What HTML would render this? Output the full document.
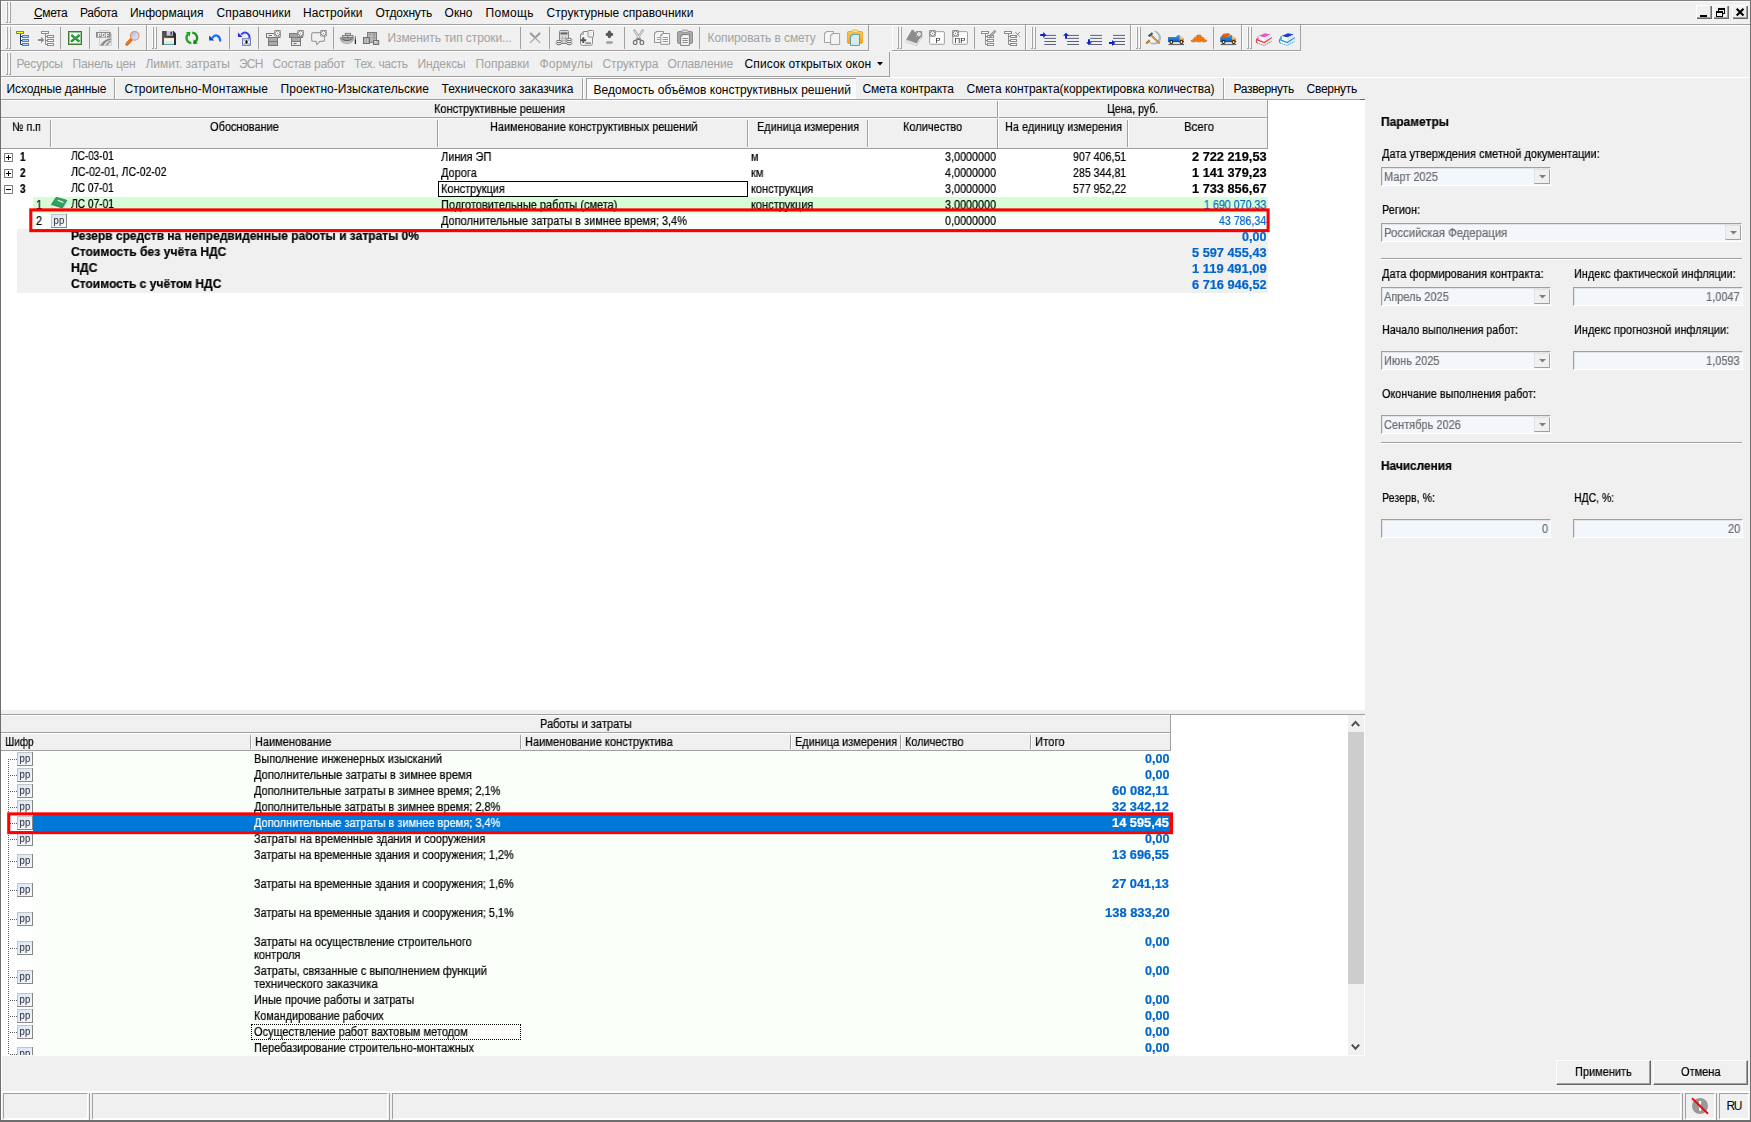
<!DOCTYPE html>
<html lang="ru"><head><meta charset="utf-8"><title>Смета</title><style>
html,body{margin:0;padding:0;background:#f0f0f0;overflow:hidden;}
#a{position:relative;width:1751px;height:1122px;overflow:hidden;background:#f0f0f0;font-family:"Liberation Sans",sans-serif;}
#a div,#a span.t,#a svg{position:absolute;}
#a span.t{white-space:pre;color:#000;}
#a span.m{font-size:12.5px;line-height:15px;transform-origin:0 0;will-change:transform;-webkit-text-stroke:.22px;}
#a span.b{font-weight:bold;}
#a span.s{font-size:12px;line-height:15px;}
</style></head><body><div id="a">
<svg style="left:0;top:0" width="0" height="0"><defs><linearGradient id="pg" x1="0" y1="0" x2=".6" y2="1"><stop offset="0" stop-color="#d8e7fc"/><stop offset=".55" stop-color="#e4edfb"/><stop offset="1" stop-color="#f6f6f8"/></linearGradient></defs></svg>
<div style="left:1px;top:1px;width:1749px;height:1px;background:#fafafa;"></div>
<div style="left:1px;top:1px;width:1px;height:98px;background:#ffffff;"></div>
<div style="left:6px;top:2px;width:1px;height:20px;background:#fafafa;"></div>
<div style="left:9px;top:2px;width:1px;height:20px;background:#fafafa;"></div>
<div style="left:7px;top:2px;width:1px;height:21px;background:#a4a4a4;"></div>
<div style="left:10px;top:2px;width:1px;height:21px;background:#a4a4a4;"></div>
<div style="left:6px;top:22px;width:1px;height:1px;background:#a4a4a4;"></div>
<div style="left:9px;top:22px;width:1px;height:1px;background:#a4a4a4;"></div>
<span class="t s" style="left:34.0px;top:6px;letter-spacing:-0.37px;">Смета</span>
<span class="t s" style="left:80.0px;top:6px;letter-spacing:-0.37px;">Работа</span>
<span class="t s" style="left:130.0px;top:6px;letter-spacing:-0.01px;">Информация</span>
<span class="t s" style="left:216.5px;top:6px;letter-spacing:0.14px;">Справочники</span>
<span class="t s" style="left:303.0px;top:6px;letter-spacing:0.07px;">Настройки</span>
<span class="t s" style="left:375.5px;top:6px;letter-spacing:-0.21px;">Отдохнуть</span>
<span class="t s" style="left:444.5px;top:6px;letter-spacing:0.05px;">Окно</span>
<span class="t s" style="left:485.5px;top:6px;letter-spacing:0.32px;">Помощь</span>
<span class="t s" style="left:546.5px;top:6px;letter-spacing:0.06px;">Структурные справочники</span>
<div style="left:34px;top:18px;width:8px;height:1px;background:#000;"></div>
<div style="left:0px;top:24px;width:1751px;height:1px;background:#a0a0a0;"></div>
<div style="left:1px;top:25px;width:1749px;height:1px;background:#ffffff;"></div>
<div style="left:1696px;top:5px;width:16px;height:14px;background:#f0f0f0;box-shadow:inset 1px 1px 0 #fff,inset -1px -1px 0 #696969,inset -2px -2px 0 #a0a0a0;"></div>
<div style="left:1713px;top:5px;width:16px;height:14px;background:#f0f0f0;box-shadow:inset 1px 1px 0 #fff,inset -1px -1px 0 #696969,inset -2px -2px 0 #a0a0a0;"></div>
<div style="left:1732px;top:5px;width:16px;height:14px;background:#f0f0f0;box-shadow:inset 1px 1px 0 #fff,inset -1px -1px 0 #696969,inset -2px -2px 0 #a0a0a0;"></div>
<svg style="left:1694px;top:3px" width="56" height="18" viewBox="1694 3 56 18" shape-rendering="crispEdges"><rect x="1700" y="15" width="7" height="2" fill="#000"/><rect x="1718" y="8" width="7" height="2" fill="#000"/><path d="M1724.5 10V13.5H1723" stroke="#000" fill="none"/><path d="M1718.5 10V11" stroke="#000"/><rect x="1716" y="11" width="7" height="2" fill="#000"/><rect x="1716.5" y="12.5" width="6" height="4" fill="none" stroke="#000"/></svg><svg style="left:1734px;top:6px" width="12" height="12" viewBox="1734 6 12 12"><path d="M1736.7 8.7L1743.5 15.5M1743.5 8.7L1736.7 15.5" stroke="#000" stroke-width="2.1"/></svg>
<div style="left:6px;top:27px;width:1px;height:21px;background:#fafafa;"></div>
<div style="left:9px;top:27px;width:1px;height:21px;background:#fafafa;"></div>
<div style="left:7px;top:27px;width:1px;height:22px;background:#a4a4a4;"></div>
<div style="left:10px;top:27px;width:1px;height:22px;background:#a4a4a4;"></div>
<div style="left:6px;top:48px;width:1px;height:1px;background:#a4a4a4;"></div>
<div style="left:9px;top:48px;width:1px;height:1px;background:#a4a4a4;"></div>
<div style="left:60px;top:27px;width:1px;height:22px;background:#a0a0a0;"></div>
<div style="left:89px;top:27px;width:1px;height:22px;background:#a0a0a0;"></div>
<div style="left:118px;top:27px;width:1px;height:22px;background:#a0a0a0;"></div>
<div style="left:229px;top:27px;width:1px;height:22px;background:#a0a0a0;"></div>
<div style="left:258px;top:27px;width:1px;height:22px;background:#a0a0a0;"></div>
<div style="left:333px;top:27px;width:1px;height:22px;background:#a0a0a0;"></div>
<div style="left:520px;top:27px;width:1px;height:22px;background:#a0a0a0;"></div>
<div style="left:549px;top:27px;width:1px;height:22px;background:#a0a0a0;"></div>
<div style="left:624px;top:27px;width:1px;height:22px;background:#a0a0a0;"></div>
<div style="left:699px;top:27px;width:1px;height:22px;background:#a0a0a0;"></div>
<div style="left:974px;top:27px;width:1px;height:22px;background:#a0a0a0;"></div>
<div style="left:1213px;top:27px;width:1px;height:22px;background:#a0a0a0;"></div>
<div style="left:146px;top:25px;width:1px;height:26px;background:#a0a0a0;"></div>
<div style="left:868px;top:25px;width:1px;height:26px;background:#a0a0a0;"></div>
<div style="left:1025px;top:25px;width:1px;height:26px;background:#a0a0a0;"></div>
<div style="left:1130px;top:25px;width:1px;height:26px;background:#a0a0a0;"></div>
<div style="left:1241px;top:25px;width:1px;height:26px;background:#a0a0a0;"></div>
<div style="left:1300px;top:25px;width:1px;height:26px;background:#a0a0a0;"></div>
<div style="left:147px;top:25px;width:1px;height:25px;background:#ffffff;"></div>
<div style="left:1026px;top:25px;width:1px;height:25px;background:#ffffff;"></div>
<div style="left:1131px;top:25px;width:1px;height:25px;background:#ffffff;"></div>
<div style="left:1242px;top:25px;width:1px;height:25px;background:#ffffff;"></div>
<div style="left:0px;top:50px;width:869px;height:1px;background:#a0a0a0;"></div>
<div style="left:892px;top:50px;width:409px;height:1px;background:#a0a0a0;"></div>
<div style="left:0px;top:51px;width:869px;height:1px;background:#ffffff;"></div>
<div style="left:892px;top:51px;width:409px;height:1px;background:#ffffff;"></div>
<div style="left:892px;top:25px;width:1px;height:25px;background:#ffffff;"></div>
<div style="left:152px;top:27px;width:1px;height:21px;background:#fafafa;"></div>
<div style="left:155px;top:27px;width:1px;height:21px;background:#fafafa;"></div>
<div style="left:153px;top:27px;width:1px;height:22px;background:#a4a4a4;"></div>
<div style="left:156px;top:27px;width:1px;height:22px;background:#a4a4a4;"></div>
<div style="left:152px;top:48px;width:1px;height:1px;background:#a4a4a4;"></div>
<div style="left:155px;top:48px;width:1px;height:1px;background:#a4a4a4;"></div>
<div style="left:897px;top:27px;width:1px;height:21px;background:#fafafa;"></div>
<div style="left:900px;top:27px;width:1px;height:21px;background:#fafafa;"></div>
<div style="left:898px;top:27px;width:1px;height:22px;background:#a4a4a4;"></div>
<div style="left:901px;top:27px;width:1px;height:22px;background:#a4a4a4;"></div>
<div style="left:897px;top:48px;width:1px;height:1px;background:#a4a4a4;"></div>
<div style="left:900px;top:48px;width:1px;height:1px;background:#a4a4a4;"></div>
<div style="left:1031px;top:27px;width:1px;height:21px;background:#fafafa;"></div>
<div style="left:1034px;top:27px;width:1px;height:21px;background:#fafafa;"></div>
<div style="left:1032px;top:27px;width:1px;height:22px;background:#a4a4a4;"></div>
<div style="left:1035px;top:27px;width:1px;height:22px;background:#a4a4a4;"></div>
<div style="left:1031px;top:48px;width:1px;height:1px;background:#a4a4a4;"></div>
<div style="left:1034px;top:48px;width:1px;height:1px;background:#a4a4a4;"></div>
<div style="left:1136px;top:27px;width:1px;height:21px;background:#fafafa;"></div>
<div style="left:1139px;top:27px;width:1px;height:21px;background:#fafafa;"></div>
<div style="left:1137px;top:27px;width:1px;height:22px;background:#a4a4a4;"></div>
<div style="left:1140px;top:27px;width:1px;height:22px;background:#a4a4a4;"></div>
<div style="left:1136px;top:48px;width:1px;height:1px;background:#a4a4a4;"></div>
<div style="left:1139px;top:48px;width:1px;height:1px;background:#a4a4a4;"></div>
<div style="left:1247px;top:27px;width:1px;height:21px;background:#fafafa;"></div>
<div style="left:1250px;top:27px;width:1px;height:21px;background:#fafafa;"></div>
<div style="left:1248px;top:27px;width:1px;height:22px;background:#a4a4a4;"></div>
<div style="left:1251px;top:27px;width:1px;height:22px;background:#a4a4a4;"></div>
<div style="left:1247px;top:48px;width:1px;height:1px;background:#a4a4a4;"></div>
<div style="left:1250px;top:48px;width:1px;height:1px;background:#a4a4a4;"></div>
<span class="t s" style="left:387.5px;top:31px;color:#a2a2a2;letter-spacing:-0.09px;">Изменить тип строки...</span>
<span class="t s" style="left:707.5px;top:31px;color:#a2a2a2;letter-spacing:-0.09px;">Копировать в смету</span>
<svg style="left:0;top:25px;will-change:transform" width="1310" height="26" viewBox="0 25 1310 26"><defs><linearGradient id="gb" x1="0" y1="0" x2="0" y2="1"><stop offset="0" stop-color="#4a9cf0"/><stop offset="1" stop-color="#0c5cc0"/></linearGradient><linearGradient id="gl" x1="0" y1="0" x2="1" y2="1"><stop offset="0" stop-color="#a4b8ee"/><stop offset="1" stop-color="#eaf0fd"/></linearGradient><linearGradient id="gs" x1="0" y1="0" x2="0" y2="1"><stop offset="0" stop-color="#fff"/><stop offset="1" stop-color="#bfe8e6"/></linearGradient><linearGradient id="gy" x1="0" y1="0" x2="0" y2="1"><stop offset="0" stop-color="#f7c858"/><stop offset="1" stop-color="#ffa400"/></linearGradient><linearGradient id="gk" x1="0" y1="0" x2="1" y2="0"><stop offset="0" stop-color="#5a5a5a"/><stop offset=".5" stop-color="#3a3a3a"/><stop offset="1" stop-color="#2a2a2a"/></linearGradient><linearGradient id="gw" x1="0" y1="0" x2="0" y2="1"><stop offset="0" stop-color="#8a8a8a"/><stop offset="1" stop-color="#d8d8d8"/></linearGradient></defs><rect x="16.5" y="31.5" width="7" height="2" fill="#ffff00" stroke="#8b8b3d"/><path d="M20.5 34V44.5M20.5 36.5h2M20.5 40.5h2M20.5 44.5h2" stroke="#1f3864" fill="none"/><rect x="22.5" y="35.5" width="6" height="2" fill="#aad4ff" stroke="#5b7fb8"/><rect x="22.5" y="39.5" width="6" height="2" fill="#aad4ff" stroke="#5b7fb8"/><rect x="22.5" y="43.5" width="6" height="2" fill="#aad4ff" stroke="#5b7fb8"/><rect x="41.5" y="31.5" width="7" height="2" fill="#fff" stroke="#8c8c8c"/><path d="M45.5 34V44.5M45.5 36.5h2M45.5 40.5h2M45.5 44.5h2" stroke="#8c8c8c" fill="none"/><rect x="47.5" y="35.5" width="6" height="2" fill="#fff" stroke="#8c8c8c"/><rect x="47.5" y="39.5" width="6" height="2" fill="#fff" stroke="#8c8c8c"/><rect x="47.5" y="43.5" width="6" height="2" fill="#fff" stroke="#8c8c8c"/><path d="M38 39h3.2v-2.2L44.3 40L41.2 43.2V41H38Z" fill="#8c8c8c"/><rect x="68.5" y="31.5" width="13" height="13" fill="#fff" stroke="#3e7a2e"/><rect x="69.5" y="32.5" width="11" height="11" fill="none" stroke="#9cc89c"/><path d="M71.4 35.2L79.4 41.6M79.6 35.2L71 41.6" stroke="#0f7a22" stroke-width="2.2"/><path d="M71.4 34.6L79.2 40.8M79.4 34.6L71.2 40.8" stroke="#36a846" stroke-width="1.5"/><path d="M99.5 30.5H108L111.5 34V45.5H99.5Z" fill="#ececec" stroke="#d0d0d0"/><path d="M100 45.4C103 41 106 38.8 111 38.2V40C107.5 40.6 105 42.5 103.5 45.4Z" fill="#8c8c8c"/><path d="M105.5 45.4C106.5 42.8 108.5 41.3 111 40.8V42.2C109.5 42.8 108.6 43.8 108 45.4Z" fill="#a0a0a0"/><rect x="96" y="32" width="14.7" height="5.6" fill="#8a8a8a"/><text x="97.6" y="36.7" font-family="Liberation Sans" font-weight="bold" font-size="5.6" fill="#fff" textLength="11.6" lengthAdjust="spacingAndGlyphs">PDF</text><path d="M131.4 39.4L127 44" stroke="#b8540c" stroke-width="3.2" stroke-linecap="round"/><path d="M131.4 39.2L127 43.7" stroke="#ee7a22" stroke-width="2" stroke-linecap="round"/><circle cx="134.7" cy="35.8" r="4.3" fill="url(#gl)" stroke="#e8935a" stroke-width="1.1"/><path d="M162 31H173.6L176 33.4V44.9H162Z" fill="url(#gk)"/><rect x="166.6" y="31" width="6.3" height="4.7" fill="#c9c9ea"/><rect x="170.4" y="31.7" width="1.6" height="3.1" fill="#4a4a4a"/><rect x="164" y="38" width="10" height="6.2" fill="url(#gs)"/><rect x="164" y="37.8" width="10" height="1" fill="#ffd9b3"/><rect x="164" y="44" width="10" height=".9" fill="#6aa8a8"/><path d="M191.34 43.18A5.3 5.3 0 0 1 188.05 34.15" stroke="#25a225" stroke-width="2.3" fill="none"/><path d="M190.46 31.75L185.79 32.31L189.89 36.42Z" fill="#25a225"/><path d="M192.26 32.62A5.3 5.3 0 0 1 195.55 41.65" stroke="#1c981c" stroke-width="2.3" fill="none"/><path d="M193.14 44.05L197.81 43.49L193.71 39.38Z" fill="#0c7c0c"/><path d="M220.2 40.6C219.8 35.6 215.6 33.6 212.4 37.6" stroke="#1a6af5" stroke-width="2.2" fill="none" stroke-linecap="round"/><path d="M209.2 35.4V40.4H214.2Z" fill="#0a3cdc"/><path d="M249.6 38.6C249.6 32.6 244.2 30.6 241.2 34.6" stroke="#3c3cf0" stroke-width="2" fill="none"/><path d="M238 32.4V37H242.6Z" fill="#2a2ae8"/><rect x="242.7" y="38.8" width="7.6" height="6.4" fill="#fff" stroke="#5060b0"/><path d="M244.6 40.4L248.4 43.6M248.4 40.4L244.6 43.6M246.5 40.2V43.8" stroke="#000" stroke-width=".9"/><rect x="268.5" y="37.5" width="9" height="8" fill="#aaa" stroke="#7a7a7a"/><path d="M268.5 41.5h9" stroke="#7a7a7a"/><rect x="266.5" y="33.5" width="13.5" height="4" fill="#eaeaea" stroke="#7a7a7a"/><path d="M268.8 35.5h3" stroke="#6a6a6a"/><rect x="274.2" y="30" width="6.6" height="6.6" rx="1.1" fill="#8a8a8a"/><path d="M275.15 33.3L277.5 30.949999999999996L279.85 33.3L277.5 35.65Z" fill="#fff"/><circle cx="277.5" cy="33.3" r=".6" fill="#8a8a8a"/><circle cx="275.35" cy="31.15" r=".5" fill="#e8e8e8"/><circle cx="275.35" cy="35.449999999999996" r=".5" fill="#e8e8e8"/><circle cx="279.65" cy="31.15" r=".5" fill="#e8e8e8"/><circle cx="279.65" cy="35.449999999999996" r=".5" fill="#e8e8e8"/><rect x="291.5" y="37.5" width="9" height="8" fill="#aaa" stroke="#7a7a7a"/><rect x="292" y="42" width="8" height="3" fill="#eaeaea"/><path d="M291.5 41.5h9" stroke="#7a7a7a"/><path d="M293.5 43.6h3" stroke="#6a6a6a"/><rect x="289.5" y="33.5" width="13" height="4" fill="#a2a2a2" stroke="#7a7a7a"/><rect x="297.3" y="30" width="6.6" height="6.6" rx="1.1" fill="#8a8a8a"/><path d="M298.25 33.3L300.6 30.949999999999996L302.95000000000005 33.3L300.6 35.65Z" fill="#fff"/><circle cx="300.6" cy="33.3" r=".6" fill="#8a8a8a"/><circle cx="298.45000000000005" cy="31.15" r=".5" fill="#e8e8e8"/><circle cx="298.45000000000005" cy="35.449999999999996" r=".5" fill="#e8e8e8"/><circle cx="302.75" cy="31.15" r=".5" fill="#e8e8e8"/><circle cx="302.75" cy="35.449999999999996" r=".5" fill="#e8e8e8"/><path d="M321 32.6H313.5Q311.6 32.6 311.6 34.5V39.4Q311.6 41.3 313.5 41.3H316L316.8 44.6L319.8 41.3H322.6Q324.5 41.3 324.5 39.4V36" fill="none" stroke="#a0a0a0" stroke-width="1.2"/><rect x="320.2" y="30" width="6.6" height="6.6" rx="1.1" fill="#8a8a8a"/><path d="M321.15 33.3L323.5 30.949999999999996L325.85 33.3L323.5 35.65Z" fill="#fff"/><circle cx="323.5" cy="33.3" r=".6" fill="#8a8a8a"/><circle cx="321.35" cy="31.15" r=".5" fill="#e8e8e8"/><circle cx="321.35" cy="35.449999999999996" r=".5" fill="#e8e8e8"/><circle cx="325.65" cy="31.15" r=".5" fill="#e8e8e8"/><circle cx="325.65" cy="35.449999999999996" r=".5" fill="#e8e8e8"/><path d="M340.2 37.5H353.8C353.8 41 351 43.7 347 43.7C343 43.7 340.2 41 340.2 37.5Z" fill="url(#gw)" stroke="#888" stroke-width=".6"/><path d="M342.5 39.3C345 40.8 349 40.8 351.5 39.3" stroke="#666" stroke-width="1.1" fill="none"/><rect x="345.3" y="33.3" width="5.3" height="2" fill="#d4d4d4" stroke="#6e6e6e" stroke-width=".8"/><rect x="342.4" y="35.5" width="5.3" height="2" fill="#d4d4d4" stroke="#6e6e6e" stroke-width=".8"/><rect x="347.7" y="35.5" width="5.3" height="2" fill="#d4d4d4" stroke="#6e6e6e" stroke-width=".8"/><path d="M355.4 36V40" stroke="#777" stroke-width="1"/><path d="M355.4 39.5V44" stroke="#222" stroke-width="1.2"/><rect x="367.5" y="32.5" width="9" height="9.8" fill="#b6b6b6" stroke="#7a7a7a"/><path d="M369 34.5h2M372.5 34h3M374 34v4M372.5 38h3" stroke="#8a8a8a" stroke-width=".8" fill="none"/><rect x="363.5" y="37.5" width="6" height="6" fill="#aaa" stroke="#707070"/><path d="M365.2 38.5v4.5M367.6 38.5v4.5" stroke="#d0d0d0" stroke-width=".8"/><rect x="373.5" y="40.5" width="5.2" height="4" fill="#bcbcbc" stroke="#707070"/><path d="M374.5 41.6h1.5" stroke="#fff" stroke-width=".8"/><path d="M530 32.8L540.2 42.8M540.2 32.8L530 42.8" stroke="#9c9c9c" stroke-width="1.1"/><path d="M530.3 33L534.6 37.2M540 33L535.6 37.2" stroke="#9c9c9c" stroke-width="2"/><rect x="559.5" y="30.5" width="9" height="13" rx="1" fill="#dcdcdc" stroke="#848484"/><rect x="560.5" y="32.4" width="7" height="2.1" fill="#666"/><path d="M562.5 36v7M565.5 36v7M560.5 38.3h7M560.5 40.6h7" stroke="#a8a8a8" stroke-width=".7"/><ellipse cx="558.9" cy="43.6" rx="2.6" ry="1.15" fill="#f2f2f2" stroke="#6e6e6e" stroke-width="1"/><ellipse cx="558.9" cy="41.5" rx="2.6" ry="1.15" fill="#f2f2f2" stroke="#6e6e6e" stroke-width="1"/><ellipse cx="569.2" cy="43.6" rx="2.6" ry="1.15" fill="#f2f2f2" stroke="#6e6e6e" stroke-width="1"/><ellipse cx="569.2" cy="41.5" rx="2.6" ry="1.15" fill="#f2f2f2" stroke="#6e6e6e" stroke-width="1"/><ellipse cx="569.2" cy="39.4" rx="2.6" ry="1.15" fill="#f2f2f2" stroke="#6e6e6e" stroke-width="1"/><path d="M583.4 31.5H590.6Q592.5 31.5 592.5 33.4V43.4Q592.5 45.3 590.6 45.3H582.4Q580.5 45.3 580.5 43.4V34.4Z" fill="#f5f5f5" stroke="#8c8c8c"/><path d="M580.5 34.4H583.4V31.5" fill="none" stroke="#8c8c8c" stroke-width=".8"/><rect x="588" y="30.5" width="5.5" height="6.5" rx=".9" fill="#fafafa" stroke="#8c8c8c"/><path d="M589.6 32.6h2M589.6 34.6h2" stroke="#c8c8c8" stroke-width=".7"/><path d="M583.3 37.3V43.1M580.4 40.2H586.2" stroke="#555" stroke-width="1.9"/><rect x="585.4" y="42.3" width="5.6" height="1.6" fill="#888"/><path d="M609.4 32.2V36.6M607.2 34.4H611.6" stroke="#585858" stroke-width="3.2" stroke-linecap="round"/><rect x="606.1" y="41.2" width="6.7" height="2.5" rx="1" fill="#9c9c9c"/><path d="M634.3 30.4L640.3 39.6M642.7 30.4L636.7 39.6" stroke="#9a9a9a" stroke-width="2.2" stroke-linecap="round"/><path d="M634.5 30.8L640.1 39.4M642.5 30.8L636.9 39.4" stroke="#f6f6f6" stroke-width=".9" stroke-linecap="round"/><path d="M638.5 38.2L636.2 40.4M638.5 38.2L640.8 40.4" stroke="#777" stroke-width="1.3"/><ellipse cx="635.2" cy="42.4" rx="1.8" ry="2.1" fill="none" stroke="#777" stroke-width="1.2"/><ellipse cx="641.9" cy="42.4" rx="1.8" ry="2.1" fill="none" stroke="#777" stroke-width="1.2"/><path d="M656.1 31.5H663.5V42.5H654.5V33.1Z" fill="#f4f4f4" stroke="#949494" stroke-linejoin="round"/><path d="M654.5 33.1H656.1V31.5" fill="none" stroke="#949494" stroke-width=".7"/><path d="M656.8 37.5h3M656.8 39.5h3" stroke="#949494" stroke-width=".9"/><path d="M662.4 33.5H669.5999999999999V44.3H660.8V35.1Z" fill="#f8f8f8" stroke="#949494" stroke-linejoin="round"/><path d="M660.8 35.1H662.4V33.5" fill="none" stroke="#949494" stroke-width=".7"/><path d="M662.6 37.5h5.4M662.6 39.5h5.4M662.6 41.5h5.4" stroke="#8c8c8c" stroke-width=".9"/><rect x="677.5" y="31.5" width="15" height="12" rx="1.3" fill="#a9a9a9" stroke="#8e8e8e"/><rect x="681.8" y="30" width="6.4" height="2.4" rx="1.1" fill="#e2e2e2" stroke="#8e8e8e" stroke-width=".8"/><path d="M682.2 34.6H689.4V45.400000000000006H680.6V36.2Z" fill="#f4f4f4" stroke="#7e7e7e" stroke-linejoin="round"/><path d="M680.6 36.2H682.2V34.6" fill="none" stroke="#7e7e7e" stroke-width=".7"/><path d="M682.4 38.5h5.4M682.4 40.5h5.4M682.4 42.5h5.4" stroke="#7e7e7e" stroke-width=".9"/><path d="M826.1 31.5H833.5V42.5H824.5V33.1Z" fill="#f6f6f6" stroke="#a4a4a4" stroke-linejoin="round"/><path d="M824.5 33.1H826.1V31.5" fill="none" stroke="#a4a4a4" stroke-width=".7"/><path d="M832.2 33.5H839.6V44.5H830.6V35.1Z" fill="#f4f4f4" stroke="#a4a4a4" stroke-linejoin="round"/><path d="M830.6 35.1H832.2V33.5" fill="none" stroke="#a4a4a4" stroke-width=".7"/><rect x="847.4" y="31.5" width="15.2" height="12" rx="1.3" fill="url(#gy)" stroke="#e8a028" stroke-width=".8"/><rect x="852" y="30" width="6" height="2.5" rx="1.2" fill="#f2e67c" stroke="#d8b040" stroke-width=".7"/><path d="M852.1 34.4H859.5V45.4H850.5V36.0Z" fill="#d2eef2" stroke="#6a98a8" stroke-linejoin="round"/><path d="M850.5 36.0H852.1V34.4" fill="none" stroke="#6a98a8" stroke-width=".7"/><path d="M906.2 39.6L916.6 43.2L921.6 35.2L921.8 37.6L916.9 45.8L906 42.2Z" fill="#e6e6e6" stroke="#b8b8b8" stroke-width=".5"/><path d="M911.6 30.2L921.6 35L916.6 43.2L906.2 39.6Z" fill="#8c8c8c"/><path d="M911.6 30.2L913.5 30.4L914 32" fill="#8c8c8c" stroke="#7a7a7a" stroke-width=".6"/><rect x="915.6" y="30.9" width="6.6" height="6.6" rx="1.1" fill="#8a8a8a"/><path d="M916.55 34.199999999999996L918.9 31.849999999999994L921.25 34.199999999999996L918.9 36.55Z" fill="#fff"/><circle cx="918.9" cy="34.199999999999996" r=".6" fill="#8a8a8a"/><circle cx="916.75" cy="32.05" r=".5" fill="#e8e8e8"/><circle cx="916.75" cy="36.349999999999994" r=".5" fill="#e8e8e8"/><circle cx="921.05" cy="32.05" r=".5" fill="#e8e8e8"/><circle cx="921.05" cy="36.349999999999994" r=".5" fill="#e8e8e8"/><rect x="929.6500000000001" y="31.65" width="14.7" height="12.6" rx=".8" fill="#fff" stroke="#929292" stroke-width=".9"/><rect x="929.1" y="30.1" width="6.7" height="6.7" rx="1.1" fill="#8a8a8a"/><path d="M930.1 33.45L932.45 31.1L934.8000000000001 33.45L932.45 35.800000000000004Z" fill="#fff"/><circle cx="932.45" cy="33.45" r=".6" fill="#8a8a8a"/><circle cx="930.3000000000001" cy="31.300000000000004" r=".5" fill="#e8e8e8"/><circle cx="930.3000000000001" cy="35.6" r=".5" fill="#e8e8e8"/><circle cx="934.6" cy="31.300000000000004" r=".5" fill="#e8e8e8"/><circle cx="934.6" cy="35.6" r=".5" fill="#e8e8e8"/><text x="935.6" y="42.9" font-family="Liberation Sans" font-size="8.1" fill="#111" textLength="4.9" lengthAdjust="spacingAndGlyphs">Р</text><rect x="952.75" y="31.65" width="14.7" height="12.6" rx=".8" fill="#fff" stroke="#929292" stroke-width=".9"/><rect x="952.1999999999999" y="30.1" width="6.7" height="6.7" rx="1.1" fill="#8a8a8a"/><path d="M953.1999999999999 33.45L955.55 31.1L957.9 33.45L955.55 35.800000000000004Z" fill="#fff"/><circle cx="955.55" cy="33.45" r=".6" fill="#8a8a8a"/><circle cx="953.4" cy="31.300000000000004" r=".5" fill="#e8e8e8"/><circle cx="953.4" cy="35.6" r=".5" fill="#e8e8e8"/><circle cx="957.6999999999999" cy="31.300000000000004" r=".5" fill="#e8e8e8"/><circle cx="957.6999999999999" cy="35.6" r=".5" fill="#e8e8e8"/><text x="954.6" y="42.9" font-family="Liberation Sans" font-size="8.1" fill="#111" textLength="10.9" lengthAdjust="spacingAndGlyphs">ПР</text><rect x="981.5" y="31.5" width="7" height="2" fill="#fff" stroke="#8c8c8c"/><path d="M985.5 34V44.5M985.5 36.5h2M985.5 40.5h2M985.5 44.5h2" stroke="#8c8c8c" fill="none"/><rect x="987.5" y="35.5" width="6" height="2" fill="#fff" stroke="#8c8c8c"/><rect x="987.5" y="39.5" width="6" height="2" fill="#fff" stroke="#8c8c8c"/><rect x="987.5" y="43.5" width="6" height="2" fill="#fff" stroke="#8c8c8c"/><path d="M995.6 30.6L989.6 36.6" stroke="#8c8c8c" stroke-width="2.4"/><path d="M995.6 30.6L990.6 35.6" stroke="#f0f0f0" stroke-width=".9" stroke-dasharray="1 .8"/><rect x="1004.5" y="31.5" width="7" height="2" fill="#fff" stroke="#8c8c8c"/><path d="M1008.5 34V44.5M1008.5 36.5h2M1008.5 40.5h2M1008.5 44.5h2" stroke="#8c8c8c" fill="none"/><rect x="1010.5" y="35.5" width="6" height="2" fill="#fff" stroke="#8c8c8c"/><rect x="1010.5" y="39.5" width="6" height="2" fill="#fff" stroke="#8c8c8c"/><rect x="1010.5" y="43.5" width="6" height="2" fill="#fff" stroke="#8c8c8c"/><path d="M1015.3 32L1019.9 36.7M1019.9 32L1015.3 36.7" stroke="#8c8c8c" stroke-width="1"/><path d="M1044.3 35.4H1056" stroke="#5a6080" stroke-width="1"/><path d="M1044.3 38.4H1056" stroke="#5a6080" stroke-width="1"/><path d="M1044.3 41.5H1056" stroke="#5a6080" stroke-width="1"/><path d="M1044.3 44.5H1056" stroke="#5a6080" stroke-width="1"/><path d="M1040.2 34h3v-1.9L1046.2 35L1043.2 37.9V36h-3Z" fill="#0a24d4"/><path d="M1067.2 35.4H1079" stroke="#5a6080" stroke-width="1"/><path d="M1067.2 38.4H1079" stroke="#5a6080" stroke-width="1"/><path d="M1067.2 41.5H1079" stroke="#5a6080" stroke-width="1"/><path d="M1067.2 44.5H1079" stroke="#5a6080" stroke-width="1"/><path d="M1065 38.8v-3h-2L1066 32.8L1069 35.8h-2v3Z" fill="#0a24d4"/><path d="M1090.2 35.4H1102" stroke="#5a6080" stroke-width="1"/><path d="M1090.2 38.4H1102" stroke="#5a6080" stroke-width="1"/><path d="M1090.2 41.5H1102" stroke="#5a6080" stroke-width="1"/><path d="M1090.2 44.5H1102" stroke="#5a6080" stroke-width="1"/><path d="M1088 39.2v3h-2L1089 45.2L1092 42.2h-2v-3Z" fill="#0a24d4"/><path d="M1113 35.4H1125" stroke="#5a6080" stroke-width="1"/><path d="M1113 38.4H1125" stroke="#5a6080" stroke-width="1"/><path d="M1113 41.5H1125" stroke="#5a6080" stroke-width="1"/><path d="M1113 44.5H1125" stroke="#5a6080" stroke-width="1"/><path d="M1109 42h3v-1.9L1115.2 43L1112 45.9V44h-3Z" fill="#0a24d4"/><path d="M1154.4 31.1C1159.4 32 1162 37 1159.9 41.2C1157.8 44.6 1152.8 45 1149.6 42.4C1153 44 1156.9 43.2 1158.5 40.2C1160 37.2 1158.4 33.2 1154.4 31.1Z" fill="#b4c6cc" stroke="#7f979f" stroke-width=".45"/><path d="M1146.3 43.4L1149.7 40.2" stroke="#a05c14" stroke-width="2"/><path d="M1146.3 43.4L1149.7 40.2" stroke="#f0983a" stroke-width="1"/><path d="M1150.8 34.8L1159.6 43.5" stroke="#a8641c" stroke-width="1.7"/><path d="M1150.8 34.8L1159.4 43.3" stroke="#f4a448" stroke-width=".8"/><path d="M1147.9 35.4L1151.9 32.3L1153.2 33.7L1149.4 36.9Z" fill="#3e5058"/><g transform="translate(0,0)"><path d="M1168 37.1H1175.6L1178.3 34.9H1179.8V41.6H1168Z" fill="url(#gb)"/><path d="M1179.8 36.4H1181.6L1184 38.9V41.8H1179.8Z" fill="#f09018"/><path d="M1180.3 37H1181.4L1182.7 38.4H1180.3Z" fill="#dff4fa"/><path d="M1168.3 41.3H1184V42.1H1168.3Z" fill="#222"/><circle cx="1171.4" cy="42" r="1.9" fill="#111"/><circle cx="1171.4" cy="42" r=".95" fill="#ffffa0"/><circle cx="1181.4" cy="42" r="1.9" fill="#111"/><circle cx="1181.4" cy="42" r=".95" fill="#ffffa0"/><path d="M1168.5 44.4H1184" stroke="#3a3a3a" stroke-width="1"/><path d="M1169.5 45.1H1183" stroke="#c4c4c4" stroke-width=".6"/></g><ellipse cx="1198.9" cy="36.2" rx="2.6" ry="1.15" fill="#ff8414" stroke="#c24c00" stroke-width=".6"/><ellipse cx="1196.3" cy="38.5" rx="2.6" ry="1.15" fill="#ff8414" stroke="#c24c00" stroke-width=".6"/><ellipse cx="1201.6" cy="38.5" rx="2.6" ry="1.15" fill="#ff8414" stroke="#c24c00" stroke-width=".6"/><ellipse cx="1193.7" cy="40.8" rx="2.6" ry="1.15" fill="#ff8414" stroke="#c24c00" stroke-width=".6"/><ellipse cx="1198.9" cy="40.8" rx="2.6" ry="1.15" fill="#ff8414" stroke="#c24c00" stroke-width=".6"/><ellipse cx="1204.2" cy="40.8" rx="2.6" ry="1.15" fill="#ff8414" stroke="#c24c00" stroke-width=".6"/><g transform="translate(52.2,0)"><ellipse cx="1171.2" cy="36.4" rx="2" ry="1.1" fill="#d85a00" stroke="#b84800" stroke-width=".4"/><ellipse cx="1174.4" cy="36.2" rx="2" ry="1.1" fill="#f07810" stroke="#b84800" stroke-width=".4"/><ellipse cx="1172.6" cy="34.8" rx="2" ry="1.1" fill="#f07810" stroke="#b84800" stroke-width=".4"/><ellipse cx="1175.6" cy="34.6" rx="2" ry="1.1" fill="#e06400" stroke="#b84800" stroke-width=".4"/><path d="M1168 37.1H1175.6L1178.3 34.9H1179.8V41.6H1168Z" fill="url(#gb)"/><path d="M1179.8 36.4H1181.6L1184 38.9V41.8H1179.8Z" fill="#f09018"/><path d="M1180.3 37H1181.4L1182.7 38.4H1180.3Z" fill="#dff4fa"/><path d="M1168.3 41.3H1184V42.1H1168.3Z" fill="#222"/><circle cx="1171.4" cy="42" r="1.9" fill="#111"/><circle cx="1171.4" cy="42" r=".95" fill="#ffffa0"/><circle cx="1181.4" cy="42" r="1.9" fill="#111"/><circle cx="1181.4" cy="42" r=".95" fill="#ffffa0"/><path d="M1168.5 44.4H1184" stroke="#3a3a3a" stroke-width="1"/><path d="M1169.5 45.1H1183" stroke="#c4c4c4" stroke-width=".6"/></g><g transform="translate(0,0)"><path d="M1256.6 40.2L1264.2 43.2L1271.7 38.2L1271.7 41.3L1264.3 45.3L1256.8 42.6Z" fill="#fff"/><path d="M1264.2 43.2L1271.7 38.2V41.3L1264.3 45.3Z" fill="#dde6f2"/><path d="M1258 38.6C1256 39 1255.8 41.8 1257.2 42.8" stroke="#f03434" stroke-width="1.1" fill="none"/><path d="M1256.8 39.6L1264.2 42.6L1271.7 37.6" stroke="#f03434" stroke-width="1.15" fill="none"/><path d="M1257 43L1264.3 45.4L1271.6 41.4" stroke="#f03434" stroke-width=".9" fill="none" stroke-dasharray="1.3 .9"/><path d="M1258.3 36L1265 33.3L1270.8 34.5L1264.4 37.4Z" fill="#e85ab2"/><path d="M1258.3 36L1264.4 37.4L1270.8 34.5V37.4L1264.4 40.7L1259 38.7Z" fill="#fff"/><path d="M1264.4 37.4L1270.8 34.5V37.4L1264.4 40.7Z" fill="#dde6f2"/><path d="M1258.3 36.2C1257.6 37 1257.9 38.3 1259 38.7" stroke="#e85ab2" stroke-width="1" fill="none"/></g><g transform="translate(23,0)"><path d="M1256.6 40.2L1264.2 43.2L1271.7 38.2L1271.7 41.3L1264.3 45.3L1256.8 42.6Z" fill="#fff"/><path d="M1264.2 43.2L1271.7 38.2V41.3L1264.3 45.3Z" fill="#dde6f2"/><path d="M1258 38.6C1256 39 1255.8 41.8 1257.2 42.8" stroke="#1c98e0" stroke-width="1.1" fill="none"/><path d="M1256.8 39.6L1264.2 42.6L1271.7 37.6" stroke="#1c98e0" stroke-width="1.15" fill="none"/><path d="M1257 43L1264.3 45.4L1271.6 41.4" stroke="#1c98e0" stroke-width=".9" fill="none" stroke-dasharray="1.3 .9"/><path d="M1258.3 36L1265 33.3L1270.8 34.5L1264.4 37.4Z" fill="#1a3cd0"/><path d="M1258.3 36L1264.4 37.4L1270.8 34.5V37.4L1264.4 40.7L1259 38.7Z" fill="#fff"/><path d="M1264.4 37.4L1270.8 34.5V37.4L1264.4 40.7Z" fill="#dde6f2"/><path d="M1258.3 36.2C1257.6 37 1257.9 38.3 1259 38.7" stroke="#1a3cd0" stroke-width="1" fill="none"/></g></svg>
<div style="left:6px;top:53px;width:1px;height:21px;background:#fafafa;"></div>
<div style="left:9px;top:53px;width:1px;height:21px;background:#fafafa;"></div>
<div style="left:7px;top:53px;width:1px;height:22px;background:#a4a4a4;"></div>
<div style="left:10px;top:53px;width:1px;height:22px;background:#a4a4a4;"></div>
<div style="left:6px;top:74px;width:1px;height:1px;background:#a4a4a4;"></div>
<div style="left:9px;top:74px;width:1px;height:1px;background:#a4a4a4;"></div>
<span class="t s" style="left:16.5px;top:57px;color:#a2a2a2;letter-spacing:-0.16px;">Ресурсы</span>
<span class="t s" style="left:72.5px;top:57px;color:#a2a2a2;letter-spacing:-0.18px;">Панель цен</span>
<span class="t s" style="left:145.5px;top:57px;color:#a2a2a2;letter-spacing:-0.05px;">Лимит. затраты</span>
<span class="t s" style="left:239.0px;top:57px;color:#a2a2a2;letter-spacing:-0.82px;">ЭСН</span>
<span class="t s" style="left:272.5px;top:57px;color:#a2a2a2;letter-spacing:-0.23px;">Состав работ</span>
<span class="t s" style="left:354.0px;top:57px;color:#a2a2a2;letter-spacing:-0.27px;">Тех. часть</span>
<span class="t s" style="left:417.5px;top:57px;color:#a2a2a2;letter-spacing:-0.13px;">Индексы</span>
<span class="t s" style="left:475.5px;top:57px;color:#a2a2a2;letter-spacing:0.04px;">Поправки</span>
<span class="t s" style="left:539.5px;top:57px;color:#a2a2a2;letter-spacing:0.18px;">Формулы</span>
<span class="t s" style="left:602.5px;top:57px;color:#a2a2a2;letter-spacing:-0.14px;">Структура</span>
<span class="t s" style="left:667.5px;top:57px;color:#a2a2a2;letter-spacing:-0.13px;">Оглавление</span>
<span class="t s" style="left:744.5px;top:57px;letter-spacing:0.11px;">Список открытых окон</span>
<svg style="left:877px;top:62px" width="6" height="4"><path d="M0 0h6l-3 3.5z" fill="#000"/></svg>
<div style="left:889px;top:52px;width:1px;height:25px;background:#a0a0a0;"></div>
<div style="left:0px;top:76px;width:890px;height:1px;background:#a0a0a0;"></div>
<div style="left:0px;top:77px;width:1751px;height:1px;background:#ffffff;"></div>
<div style="left:586px;top:78px;width:270px;height:21px;background:#fafafa;"></div>
<div style="left:586px;top:78px;width:270px;height:1px;background:#a0a0a0;"></div>
<div style="left:586px;top:78px;width:1px;height:21px;background:#a0a0a0;"></div>
<div style="left:587px;top:98px;width:269px;height:1px;background:#ffffff;"></div>
<span class="t s" style="left:6.5px;top:82px;letter-spacing:-0.1px;">Исходные данные</span>
<span class="t s" style="left:124.5px;top:82px;letter-spacing:0.08px;">Строительно-Монтажные</span>
<span class="t s" style="left:280.5px;top:82px;letter-spacing:0.06px;">Проектно-Изыскательские</span>
<span class="t s" style="left:441.5px;top:82px;">Технического заказчика</span>
<span class="t s" style="left:862.5px;top:82px;letter-spacing:-0.15px;">Смета контракта</span>
<span class="t s" style="left:966.5px;top:82px;letter-spacing:-0.03px;">Смета контракта(корректировка количества)</span>
<span class="t s" style="left:1233.5px;top:82px;letter-spacing:-0.33px;">Развернуть</span>
<span class="t s" style="left:1306.5px;top:82px;letter-spacing:-0.26px;">Свернуть</span>
<span class="t s" style="left:593.5px;top:83px;letter-spacing:0.01px;">Ведомость объёмов конструктивных решений</span>
<div style="left:114px;top:78px;width:1px;height:21px;background:#a0a0a0;"></div>
<div style="left:115px;top:78px;width:1px;height:21px;background:#ffffff;"></div>
<div style="left:582px;top:78px;width:1px;height:21px;background:#a0a0a0;"></div>
<div style="left:583px;top:78px;width:1px;height:21px;background:#ffffff;"></div>
<div style="left:1223px;top:78px;width:1px;height:21px;background:#a0a0a0;"></div>
<div style="left:1224px;top:78px;width:1px;height:21px;background:#ffffff;"></div>
<div style="left:0px;top:99px;width:1364px;height:1px;background:#a0a0a0;"></div>
<div style="left:1px;top:100px;width:1364px;height:610px;background:#ffffff;"></div>
<div style="left:1px;top:100px;width:1267px;height:48px;background:#f0f0f0;"></div>
<div style="left:1px;top:117px;width:1267px;height:1px;background:#a0a0a0;"></div>
<div style="left:1px;top:148px;width:1267px;height:1px;background:#a0a0a0;"></div>
<div style="left:1267px;top:100px;width:1px;height:49px;background:#a0a0a0;"></div>
<div style="left:997px;top:100px;width:1px;height:48px;background:#a0a0a0;"></div>
<div style="left:1px;top:118px;width:1266px;height:1px;background:#ffffff;"></div>
<div style="left:1px;top:100px;width:1266px;height:1px;background:#ffffff;"></div>
<div style="left:50px;top:120px;width:1px;height:27px;background:#a0a0a0;"></div>
<div style="left:51px;top:120px;width:1px;height:27px;background:#ffffff;"></div>
<div style="left:437px;top:120px;width:1px;height:27px;background:#a0a0a0;"></div>
<div style="left:438px;top:120px;width:1px;height:27px;background:#ffffff;"></div>
<div style="left:747px;top:120px;width:1px;height:27px;background:#a0a0a0;"></div>
<div style="left:748px;top:120px;width:1px;height:27px;background:#ffffff;"></div>
<div style="left:867px;top:120px;width:1px;height:27px;background:#a0a0a0;"></div>
<div style="left:868px;top:120px;width:1px;height:27px;background:#ffffff;"></div>
<div style="left:1127px;top:120px;width:1px;height:27px;background:#a0a0a0;"></div>
<div style="left:1128px;top:120px;width:1px;height:27px;background:#ffffff;"></div>
<div style="left:998px;top:100px;width:1px;height:48px;background:#ffffff;"></div>
<span class="t m" style="left:434.0px;top:102px;transform:scaleX(0.8793);">Конструктивные решения</span>
<span class="t m" style="left:1107.0px;top:102px;transform:scaleX(0.8415);">Цена, руб.</span>
<span class="t m" style="left:11.5px;top:120px;transform:scaleX(0.8553);">№ п.п</span>
<span class="t m" style="left:209.5px;top:120px;transform:scaleX(0.88);">Обоснование</span>
<span class="t m" style="left:489.5px;top:120px;transform:scaleX(0.8757);">Наименование конструктивных решений</span>
<span class="t m" style="left:757.0px;top:120px;transform:scaleX(0.8725);">Единица измерения</span>
<span class="t m" style="left:903.0px;top:120px;transform:scaleX(0.8802);">Количество</span>
<span class="t m" style="left:1004.5px;top:120px;transform:scaleX(0.8731);">На единицу измерения</span>
<span class="t m" style="left:1183.5px;top:120px;transform:scaleX(0.9182);">Всего</span>
<span class="t m b" style="left:20.0px;top:150px;transform:scaleX(0.791);">1</span>
<span class="t m" style="left:71.0px;top:149px;transform:scaleX(0.8);">ЛС-03-01</span>
<span class="t m" style="left:441.0px;top:150px;transform:scaleX(0.88);">Линия ЭП</span>
<span class="t m" style="left:750.5px;top:150px;transform:scaleX(0.88);">м</span>
<span class="t m" style="left:945.0px;top:150px;transform:scaleX(0.863);">3,0000000</span>
<span class="t m" style="left:1073.0px;top:150px;transform:scaleX(0.8503);">907 406,51</span>
<span class="t m b" style="left:1191.5px;top:150px;transform:scaleX(1.0219);">2 722 219,53</span>
<span class="t m b" style="left:20.0px;top:166px;transform:scaleX(0.791);">2</span>
<span class="t m" style="left:71.0px;top:165px;transform:scaleX(0.8401);">ЛС-02-01, ЛС-02-02</span>
<span class="t m" style="left:441.0px;top:166px;transform:scaleX(0.88);">Дорога</span>
<span class="t m" style="left:750.5px;top:166px;transform:scaleX(0.88);">км</span>
<span class="t m" style="left:945.0px;top:166px;transform:scaleX(0.863);">4,0000000</span>
<span class="t m" style="left:1073.0px;top:166px;transform:scaleX(0.8503);">285 344,81</span>
<span class="t m b" style="left:1191.5px;top:166px;transform:scaleX(1.0219);">1 141 379,23</span>
<span class="t m b" style="left:20.0px;top:182px;transform:scaleX(0.791);">3</span>
<span class="t m" style="left:71.0px;top:181px;transform:scaleX(0.8104);">ЛС 07-01</span>
<span class="t m" style="left:750.5px;top:182px;transform:scaleX(0.88);">конструкция</span>
<span class="t m" style="left:945.0px;top:182px;transform:scaleX(0.863);">3,0000000</span>
<span class="t m" style="left:1073.0px;top:182px;transform:scaleX(0.8503);">577 952,22</span>
<span class="t m b" style="left:1191.5px;top:182px;transform:scaleX(1.0219);">1 733 856,67</span>
<div style="left:438px;top:181px;width:310px;height:16px;background:#ffffff;box-sizing:border-box;border:1px solid #000;"></div>
<span class="t m" style="left:441.0px;top:182px;transform:scaleX(0.88);">Конструкция</span>
<svg style="left:4px;top:153px" width="9" height="9" shape-rendering="crispEdges"><rect x=".5" y=".5" width="8" height="8" fill="#fff" stroke="#808080"/><path d="M2 4.5h5" stroke="#000"/><path d="M4.5 2v5" stroke="#000"/></svg>
<svg style="left:4px;top:169px" width="9" height="9" shape-rendering="crispEdges"><rect x=".5" y=".5" width="8" height="8" fill="#fff" stroke="#808080"/><path d="M2 4.5h5" stroke="#000"/><path d="M4.5 2v5" stroke="#000"/></svg>
<svg style="left:4px;top:185px" width="9" height="9" shape-rendering="crispEdges"><rect x=".5" y=".5" width="8" height="8" fill="#fff" stroke="#808080"/><path d="M2 4.5h5" stroke="#000"/></svg>
<div style="left:33px;top:197px;width:1235px;height:16px;background:#d6fdd6;"></div>
<span class="t m" style="left:35.5px;top:198px;transform:scaleX(0.88);">1</span>
<span class="t m" style="left:71.0px;top:197px;transform:scaleX(0.8142);">ЛС 07-01</span>
<span class="t m" style="left:441.0px;top:198px;transform:scaleX(0.88);">Подготовительные работы (смета)</span>
<span class="t m" style="left:750.5px;top:198px;transform:scaleX(0.88);">конструкция</span>
<span class="t m" style="left:945.0px;top:198px;transform:scaleX(0.863);">3,0000000</span>
<span class="t m" style="left:1203.5px;top:198px;transform:scaleX(0.8548);color:#0066cc;">1 690 070,33</span>
<svg style="left:51px;top:197px" width="17" height="16" viewBox="51 197 17 16"><path d="M51.4 204.5L62.3 207.9L66.8 200.3L66.9 203.2L62.6 212L51.5 207.6Z" fill="#f0f0f0" stroke="#c8c8d0" stroke-width=".5"/><path d="M62.3 207.9L66.8 200.3L66.9 203.2L62.6 212Z" fill="#d8dce4"/><path d="M56.2 197.2L66.8 200.3L62.3 207.9L51.4 204.5Z" fill="#32a260" stroke="#1f8a52" stroke-width=".8" stroke-linejoin="round"/><path d="M57.8 200.2L63.4 202.4" stroke="#f4fff4" stroke-width="1.1"/></svg>
<div style="left:17px;top:229px;width:1251px;height:64px;background:#f0f0f0;"></div>
<span class="t m b" style="left:70.5px;top:229px;transform:scaleX(0.9602);">Резерв средств на непредвиденные работы и затраты 0%</span>
<span class="t m b" style="left:1241.5px;top:230px;transform:scaleX(0.9982);color:#0066cc;">0,00</span>
<span class="t m b" style="left:70.5px;top:245px;transform:scaleX(0.9705);">Стоимость без учёта НДС</span>
<span class="t m b" style="left:1191.5px;top:246px;transform:scaleX(1.0219);color:#0066cc;">5 597 455,43</span>
<span class="t m b" style="left:70.5px;top:261px;transform:scaleX(0.9789);">НДС</span>
<span class="t m b" style="left:1191.5px;top:262px;transform:scaleX(1.0319);color:#0066cc;">1 119 491,09</span>
<span class="t m b" style="left:70.5px;top:277px;transform:scaleX(0.9655);">Стоимость с учётом НДС</span>
<span class="t m b" style="left:1191.5px;top:278px;transform:scaleX(1.0219);color:#0066cc;">6 716 946,52</span>
<div style="left:33px;top:213px;width:1235px;height:16px;background:#fbfffb;"></div>
<svg style="left:28px;top:207px" width="1244" height="27" viewBox="28 207 1244 27"><rect x="30.8" y="209.9" width="1237.3" height="20.7" fill="none" stroke="#ff0000" stroke-width="3.1"/></svg>
<span class="t m" style="left:35.5px;top:214px;transform:scaleX(0.88);">2</span>
<span class="t m" style="left:441.0px;top:214px;transform:scaleX(0.8804);">Дополнительные затраты в зимнее время; 3,4%</span>
<span class="t m" style="left:945.0px;top:214px;transform:scaleX(0.863);">0,0000000</span>
<span class="t m" style="left:1219.0px;top:214px;transform:scaleX(0.847);color:#0066cc;">43 786,34</span>
<svg style="left:51px;top:214px;will-change:transform" width="16" height="14" viewBox="0 0 16 14"><rect x="0" y="0" width="16" height="14" fill="#868686"/><rect x="0" y="0" width="15" height="13" fill="#c4c4c4"/><rect x="1" y="1" width="14" height="12" fill="url(#pg)"/><text x="2.6" y="9.8" font-family="Liberation Sans" font-size="11" fill="#2a2a2a" textLength="10.6" lengthAdjust="spacingAndGlyphs">рр</text></svg>
<div style="left:1px;top:710px;width:1364px;height:5px;background:#f0f0f0;"></div>
<div style="left:1px;top:714px;width:1364px;height:1px;background:#a0a0a0;"></div>
<div style="left:1px;top:715px;width:1364px;height:341px;background:#ffffff;"></div>
<div style="left:1px;top:715px;width:1169px;height:35px;background:#f0f0f0;"></div>
<div style="left:1px;top:715px;width:1169px;height:1px;background:#ffffff;"></div>
<div style="left:1px;top:732px;width:1169px;height:1px;background:#a0a0a0;"></div>
<div style="left:1px;top:733px;width:1169px;height:1px;background:#ffffff;"></div>
<div style="left:1px;top:750px;width:1170px;height:1px;background:#a0a0a0;"></div>
<div style="left:1170px;top:715px;width:1px;height:36px;background:#a0a0a0;"></div>
<div style="left:250px;top:735px;width:1px;height:14px;background:#a0a0a0;"></div>
<div style="left:251px;top:735px;width:1px;height:14px;background:#ffffff;"></div>
<div style="left:520px;top:735px;width:1px;height:14px;background:#a0a0a0;"></div>
<div style="left:521px;top:735px;width:1px;height:14px;background:#ffffff;"></div>
<div style="left:790px;top:735px;width:1px;height:14px;background:#a0a0a0;"></div>
<div style="left:791px;top:735px;width:1px;height:14px;background:#ffffff;"></div>
<div style="left:900px;top:735px;width:1px;height:14px;background:#a0a0a0;"></div>
<div style="left:901px;top:735px;width:1px;height:14px;background:#ffffff;"></div>
<div style="left:1030px;top:735px;width:1px;height:14px;background:#a0a0a0;"></div>
<div style="left:1031px;top:735px;width:1px;height:14px;background:#ffffff;"></div>
<span class="t m" style="left:540.0px;top:717px;transform:scaleX(0.8861);">Работы и затраты</span>
<span class="t m" style="left:4.5px;top:735px;transform:scaleX(0.8014);">Шифр</span>
<span class="t m" style="left:254.5px;top:735px;transform:scaleX(0.88);">Наименование</span>
<span class="t m" style="left:524.5px;top:735px;transform:scaleX(0.8876);">Наименование конструктива</span>
<span class="t m" style="left:794.5px;top:735px;transform:scaleX(0.8725);">Единица измерения</span>
<span class="t m" style="left:904.5px;top:735px;transform:scaleX(0.8713);">Количество</span>
<span class="t m" style="left:1034.5px;top:735px;transform:scaleX(0.9064);">Итого</span>
<div style="left:1px;top:751px;width:1171px;height:305px;background:#ffffff;"></div>
<div style="left:33px;top:751px;width:1138px;height:305px;background:#fafffa;"></div>
<div style="left:8px;top:759px;width:0;height:295px;border-left:1px dotted #606060"></div>
<span class="t m" style="left:253.5px;top:752px;transform:scaleX(0.8816);">Выполнение инженерных изысканий</span>
<span class="t m b" style="left:1144.5px;top:752px;transform:scaleX(1.0023);color:#0066cc;">0,00</span>
<div style="left:10px;top:759px;width:7px;height:0;border-top:1px dotted #606060"></div>
<svg style="left:17px;top:752px;will-change:transform" width="16" height="14" viewBox="0 0 16 14"><rect x="0" y="0" width="16" height="14" fill="#868686"/><rect x="0" y="0" width="15" height="13" fill="#c4c4c4"/><rect x="1" y="1" width="14" height="12" fill="url(#pg)"/><text x="2.6" y="9.8" font-family="Liberation Sans" font-size="11" fill="#2a2a2a" textLength="10.6" lengthAdjust="spacingAndGlyphs">рр</text></svg>
<span class="t m" style="left:253.5px;top:768px;transform:scaleX(0.8923);">Дополнительные затраты в зимнее время</span>
<span class="t m b" style="left:1144.5px;top:768px;transform:scaleX(1.0023);color:#0066cc;">0,00</span>
<div style="left:10px;top:775px;width:7px;height:0;border-top:1px dotted #606060"></div>
<svg style="left:17px;top:768px;will-change:transform" width="16" height="14" viewBox="0 0 16 14"><rect x="0" y="0" width="16" height="14" fill="#868686"/><rect x="0" y="0" width="15" height="13" fill="#c4c4c4"/><rect x="1" y="1" width="14" height="12" fill="url(#pg)"/><text x="2.6" y="9.8" font-family="Liberation Sans" font-size="11" fill="#2a2a2a" textLength="10.6" lengthAdjust="spacingAndGlyphs">рр</text></svg>
<span class="t m" style="left:253.5px;top:784px;transform:scaleX(0.8822);">Дополнительные затраты в зимнее время; 2,1%</span>
<span class="t m b" style="left:1112.0px;top:784px;transform:scaleX(1.0378);color:#0066cc;">60 082,11</span>
<div style="left:10px;top:791px;width:7px;height:0;border-top:1px dotted #606060"></div>
<svg style="left:17px;top:784px;will-change:transform" width="16" height="14" viewBox="0 0 16 14"><rect x="0" y="0" width="16" height="14" fill="#868686"/><rect x="0" y="0" width="15" height="13" fill="#c4c4c4"/><rect x="1" y="1" width="14" height="12" fill="url(#pg)"/><text x="2.6" y="9.8" font-family="Liberation Sans" font-size="11" fill="#2a2a2a" textLength="10.6" lengthAdjust="spacingAndGlyphs">рр</text></svg>
<span class="t m" style="left:253.5px;top:800px;transform:scaleX(0.8822);">Дополнительные затраты в зимнее время; 2,8%</span>
<span class="t m b" style="left:1112.0px;top:800px;transform:scaleX(1.025);color:#0066cc;">32 342,12</span>
<div style="left:10px;top:807px;width:7px;height:0;border-top:1px dotted #606060"></div>
<svg style="left:17px;top:800px;will-change:transform" width="16" height="14" viewBox="0 0 16 14"><rect x="0" y="0" width="16" height="14" fill="#868686"/><rect x="0" y="0" width="15" height="13" fill="#c4c4c4"/><rect x="1" y="1" width="14" height="12" fill="url(#pg)"/><text x="2.6" y="9.8" font-family="Liberation Sans" font-size="11" fill="#2a2a2a" textLength="10.6" lengthAdjust="spacingAndGlyphs">рр</text></svg>
<div style="left:33px;top:815px;width:1137px;height:16px;background:#0078d7;"></div>
<span class="t m" style="left:253.5px;top:816px;transform:scaleX(0.8822);color:#fff;">Дополнительные затраты в зимнее время; 3,4%</span>
<span class="t m b" style="left:1112.0px;top:816px;transform:scaleX(1.025);color:#fff;">14 595,45</span>
<div style="left:10px;top:823px;width:7px;height:0;border-top:1px dotted #606060"></div>
<svg style="left:17px;top:816px;will-change:transform" width="16" height="14" viewBox="0 0 16 14"><rect x="0" y="0" width="16" height="14" fill="#868686"/><rect x="0" y="0" width="15" height="13" fill="#c4c4c4"/><rect x="1" y="1" width="14" height="12" fill="url(#pg)"/><text x="2.6" y="9.8" font-family="Liberation Sans" font-size="11" fill="#2a2a2a" textLength="10.6" lengthAdjust="spacingAndGlyphs">рр</text></svg>
<span class="t m" style="left:253.5px;top:832px;transform:scaleX(0.8823);">Затраты на временные здания и сооружения</span>
<span class="t m b" style="left:1144.5px;top:832px;transform:scaleX(1.0023);color:#0066cc;">0,00</span>
<div style="left:10px;top:839px;width:7px;height:0;border-top:1px dotted #606060"></div>
<svg style="left:17px;top:832px;will-change:transform" width="16" height="14" viewBox="0 0 16 14"><rect x="0" y="0" width="16" height="14" fill="#868686"/><rect x="0" y="0" width="15" height="13" fill="#c4c4c4"/><rect x="1" y="1" width="14" height="12" fill="url(#pg)"/><text x="2.6" y="9.8" font-family="Liberation Sans" font-size="11" fill="#2a2a2a" textLength="10.6" lengthAdjust="spacingAndGlyphs">рр</text></svg>
<span class="t m" style="left:253.5px;top:848px;transform:scaleX(0.8727);">Затраты на временные здания и сооружения; 1,2%</span>
<span class="t m b" style="left:1112.0px;top:848px;transform:scaleX(1.025);color:#0066cc;">13 696,55</span>
<div style="left:10px;top:861px;width:7px;height:0;border-top:1px dotted #606060"></div>
<svg style="left:17px;top:854px;will-change:transform" width="16" height="14" viewBox="0 0 16 14"><rect x="0" y="0" width="16" height="14" fill="#868686"/><rect x="0" y="0" width="15" height="13" fill="#c4c4c4"/><rect x="1" y="1" width="14" height="12" fill="url(#pg)"/><text x="2.6" y="9.8" font-family="Liberation Sans" font-size="11" fill="#2a2a2a" textLength="10.6" lengthAdjust="spacingAndGlyphs">рр</text></svg>
<span class="t m" style="left:253.5px;top:877px;transform:scaleX(0.8727);">Затраты на временные здания и сооружения; 1,6%</span>
<span class="t m b" style="left:1112.0px;top:877px;transform:scaleX(1.025);color:#0066cc;">27 041,13</span>
<div style="left:10px;top:890px;width:7px;height:0;border-top:1px dotted #606060"></div>
<svg style="left:17px;top:883px;will-change:transform" width="16" height="14" viewBox="0 0 16 14"><rect x="0" y="0" width="16" height="14" fill="#868686"/><rect x="0" y="0" width="15" height="13" fill="#c4c4c4"/><rect x="1" y="1" width="14" height="12" fill="url(#pg)"/><text x="2.6" y="9.8" font-family="Liberation Sans" font-size="11" fill="#2a2a2a" textLength="10.6" lengthAdjust="spacingAndGlyphs">рр</text></svg>
<span class="t m" style="left:253.5px;top:906px;transform:scaleX(0.8727);">Затраты на временные здания и сооружения; 5,1%</span>
<span class="t m b" style="left:1104.5px;top:906px;transform:scaleX(1.0342);color:#0066cc;">138 833,20</span>
<div style="left:10px;top:919px;width:7px;height:0;border-top:1px dotted #606060"></div>
<svg style="left:17px;top:912px;will-change:transform" width="16" height="14" viewBox="0 0 16 14"><rect x="0" y="0" width="16" height="14" fill="#868686"/><rect x="0" y="0" width="15" height="13" fill="#c4c4c4"/><rect x="1" y="1" width="14" height="12" fill="url(#pg)"/><text x="2.6" y="9.8" font-family="Liberation Sans" font-size="11" fill="#2a2a2a" textLength="10.6" lengthAdjust="spacingAndGlyphs">рр</text></svg>
<span class="t m" style="left:253.5px;top:935px;transform:scaleX(0.8835);">Затраты на осуществление строительного</span>
<span class="t m" style="left:253.5px;top:948px;transform:scaleX(0.8792);">контроля</span>
<span class="t m b" style="left:1144.5px;top:935px;transform:scaleX(1.0023);color:#0066cc;">0,00</span>
<div style="left:10px;top:948px;width:7px;height:0;border-top:1px dotted #606060"></div>
<svg style="left:17px;top:941px;will-change:transform" width="16" height="14" viewBox="0 0 16 14"><rect x="0" y="0" width="16" height="14" fill="#868686"/><rect x="0" y="0" width="15" height="13" fill="#c4c4c4"/><rect x="1" y="1" width="14" height="12" fill="url(#pg)"/><text x="2.6" y="9.8" font-family="Liberation Sans" font-size="11" fill="#2a2a2a" textLength="10.6" lengthAdjust="spacingAndGlyphs">рр</text></svg>
<span class="t m" style="left:253.5px;top:964px;transform:scaleX(0.8842);">Затраты, связанные с выполнением функций</span>
<span class="t m" style="left:253.5px;top:977px;transform:scaleX(0.9086);">технического заказчика</span>
<span class="t m b" style="left:1144.5px;top:964px;transform:scaleX(1.0023);color:#0066cc;">0,00</span>
<div style="left:10px;top:977px;width:7px;height:0;border-top:1px dotted #606060"></div>
<svg style="left:17px;top:970px;will-change:transform" width="16" height="14" viewBox="0 0 16 14"><rect x="0" y="0" width="16" height="14" fill="#868686"/><rect x="0" y="0" width="15" height="13" fill="#c4c4c4"/><rect x="1" y="1" width="14" height="12" fill="url(#pg)"/><text x="2.6" y="9.8" font-family="Liberation Sans" font-size="11" fill="#2a2a2a" textLength="10.6" lengthAdjust="spacingAndGlyphs">рр</text></svg>
<span class="t m" style="left:253.5px;top:993px;transform:scaleX(0.8774);">Иные прочие работы и затраты</span>
<span class="t m b" style="left:1144.5px;top:993px;transform:scaleX(1.0023);color:#0066cc;">0,00</span>
<div style="left:10px;top:1000px;width:7px;height:0;border-top:1px dotted #606060"></div>
<svg style="left:17px;top:993px;will-change:transform" width="16" height="14" viewBox="0 0 16 14"><rect x="0" y="0" width="16" height="14" fill="#868686"/><rect x="0" y="0" width="15" height="13" fill="#c4c4c4"/><rect x="1" y="1" width="14" height="12" fill="url(#pg)"/><text x="2.6" y="9.8" font-family="Liberation Sans" font-size="11" fill="#2a2a2a" textLength="10.6" lengthAdjust="spacingAndGlyphs">рр</text></svg>
<span class="t m" style="left:253.5px;top:1009px;transform:scaleX(0.8639);">Командирование рабочих</span>
<span class="t m b" style="left:1144.5px;top:1009px;transform:scaleX(1.0023);color:#0066cc;">0,00</span>
<div style="left:10px;top:1016px;width:7px;height:0;border-top:1px dotted #606060"></div>
<svg style="left:17px;top:1009px;will-change:transform" width="16" height="14" viewBox="0 0 16 14"><rect x="0" y="0" width="16" height="14" fill="#868686"/><rect x="0" y="0" width="15" height="13" fill="#c4c4c4"/><rect x="1" y="1" width="14" height="12" fill="url(#pg)"/><text x="2.6" y="9.8" font-family="Liberation Sans" font-size="11" fill="#2a2a2a" textLength="10.6" lengthAdjust="spacingAndGlyphs">рр</text></svg>
<span class="t m" style="left:253.5px;top:1025px;transform:scaleX(0.8788);">Осуществление работ вахтовым методом</span>
<span class="t m b" style="left:1144.5px;top:1025px;transform:scaleX(1.0023);color:#0066cc;">0,00</span>
<div style="left:10px;top:1032px;width:7px;height:0;border-top:1px dotted #606060"></div>
<svg style="left:17px;top:1025px;will-change:transform" width="16" height="14" viewBox="0 0 16 14"><rect x="0" y="0" width="16" height="14" fill="#868686"/><rect x="0" y="0" width="15" height="13" fill="#c4c4c4"/><rect x="1" y="1" width="14" height="12" fill="url(#pg)"/><text x="2.6" y="9.8" font-family="Liberation Sans" font-size="11" fill="#2a2a2a" textLength="10.6" lengthAdjust="spacingAndGlyphs">рр</text></svg>
<span class="t m" style="left:253.5px;top:1041px;transform:scaleX(0.8802);">Перебазирование строительно-монтажных</span>
<span class="t m b" style="left:1144.5px;top:1041px;transform:scaleX(1.0023);color:#0066cc;">0,00</span>
<div style="left:10px;top:1054px;width:7px;height:0;border-top:1px dotted #606060"></div>
<div style="left:17px;top:1047px;width:16px;height:8px;overflow:hidden"><svg style="left:0px;top:0px;will-change:transform" width="16" height="14" viewBox="0 0 16 14"><rect x="0" y="0" width="16" height="14" fill="#868686"/><rect x="0" y="0" width="15" height="13" fill="#c4c4c4"/><rect x="1" y="1" width="14" height="12" fill="url(#pg)"/><text x="2.6" y="9.8" font-family="Liberation Sans" font-size="11" fill="#2a2a2a" textLength="10.6" lengthAdjust="spacingAndGlyphs">рр</text></svg></div>
<svg style="left:5px;top:810px" width="1172" height="27" viewBox="5 810 1172 27"><rect x="8.75" y="813.9" width="1162.8" height="18.7" fill="none" stroke="#ff0000" stroke-width="3.1"/></svg>
<div style="left:251px;top:1024px;width:270px;height:16px;border:1px dotted #000;box-sizing:border-box"></div>
<div style="left:1px;top:1056px;width:1364px;height:40px;background:#f0f0f0;"></div>
<div style="left:1px;top:1056px;width:1px;height:64px;background:#ffffff;"></div>
<div style="left:1348px;top:715px;width:16px;height:340px;background:#f0f0f0;"></div>
<div style="left:1364px;top:715px;width:1px;height:341px;background:#ffffff;"></div>
<div style="left:1348px;top:732px;width:16px;height:252px;background:#cdcdcd;"></div>
<svg style="left:1348px;top:715px" width="16" height="340" viewBox="1348 715 16 340"><path d="M1351.8 726L1355.5 721.9L1359.2 726M1351.8 1044.6L1355.5 1048.7L1359.2 1044.6" stroke="#505050" stroke-width="2" fill="none"/></svg>
<div style="left:1px;top:1055px;width:1364px;height:1px;background:#ffffff;"></div>
<div style="left:1365px;top:100px;width:386px;height:992px;background:#f0f0f0;"></div>
<div style="left:1360px;top:99px;width:5px;height:1px;background:#696969;"></div>
<span class="t m b" style="left:1381.0px;top:115px;transform:scaleX(0.9577);">Параметры</span>
<span class="t m b" style="left:1381.0px;top:459px;transform:scaleX(0.9488);">Начисления</span>
<span class="t m" style="left:1381.5px;top:147px;transform:scaleX(0.8805);">Дата утверждения сметной документации:</span>
<div style="left:1381px;top:167px;width:170px;height:19px;background:#f3f6fb;box-sizing:border-box;border:1px solid;border-color:#a0a0a0 #fff #fff #a0a0a0;box-shadow:inset 1px 1px 0 #e3e3e3;"></div>
<div style="left:1534px;top:169px;width:16px;height:15px;background:#f0f0f0;box-sizing:border-box;border:1px solid;border-color:#e3e3e3 #a0a0a0 #a0a0a0 #e3e3e3;"></div>
<svg style="left:1539px;top:175px" width="7" height="4"><path d="M0 0h7l-3.5 3.5z" fill="#808080"/></svg>
<span class="t m" style="left:1384.0px;top:170px;transform:scaleX(0.88);color:#6d6d6d;">Март 2025</span>
<span class="t m" style="left:1381.5px;top:203px;transform:scaleX(0.8711);">Регион:</span>
<div style="left:1381px;top:223px;width:361px;height:19px;background:#f3f6fb;box-sizing:border-box;border:1px solid;border-color:#a0a0a0 #fff #fff #a0a0a0;box-shadow:inset 1px 1px 0 #e3e3e3;"></div>
<div style="left:1725px;top:225px;width:16px;height:15px;background:#f0f0f0;box-sizing:border-box;border:1px solid;border-color:#e3e3e3 #a0a0a0 #a0a0a0 #e3e3e3;"></div>
<svg style="left:1730px;top:231px" width="7" height="4"><path d="M0 0h7l-3.5 3.5z" fill="#808080"/></svg>
<span class="t m" style="left:1384.0px;top:226px;transform:scaleX(0.909);color:#6d6d6d;">Российская Федерация</span>
<div style="left:1381px;top:258px;width:361px;height:1px;background:#a0a0a0;"></div>
<div style="left:1381px;top:259px;width:361px;height:1px;background:#ffffff;"></div>
<span class="t m" style="left:1381.5px;top:267px;transform:scaleX(0.8819);">Дата формирования контракта:</span>
<span class="t m" style="left:1573.5px;top:267px;transform:scaleX(0.8679);">Индекс фактической инфляции:</span>
<div style="left:1381px;top:287px;width:170px;height:19px;background:#f3f6fb;box-sizing:border-box;border:1px solid;border-color:#a0a0a0 #fff #fff #a0a0a0;box-shadow:inset 1px 1px 0 #e3e3e3;"></div>
<div style="left:1534px;top:289px;width:16px;height:15px;background:#f0f0f0;box-sizing:border-box;border:1px solid;border-color:#e3e3e3 #a0a0a0 #a0a0a0 #e3e3e3;"></div>
<svg style="left:1539px;top:295px" width="7" height="4"><path d="M0 0h7l-3.5 3.5z" fill="#808080"/></svg>
<span class="t m" style="left:1384.0px;top:290px;transform:scaleX(0.88);color:#6d6d6d;">Апрель 2025</span>
<div style="left:1573px;top:287px;width:170px;height:19px;background:#f3f6fb;box-sizing:border-box;border:1px solid;border-color:#a0a0a0 #fff #fff #a0a0a0;box-shadow:inset 1px 1px 0 #e3e3e3;"></div>
<span class="t m" style="left:1706.0px;top:290px;transform:scaleX(0.88);color:#6d6d6d;">1,0047</span>
<span class="t m" style="left:1381.5px;top:323px;transform:scaleX(0.859);">Начало выполнения работ:</span>
<span class="t m" style="left:1573.5px;top:323px;transform:scaleX(0.8768);">Индекс прогнозной инфляции:</span>
<div style="left:1381px;top:351px;width:170px;height:19px;background:#f3f6fb;box-sizing:border-box;border:1px solid;border-color:#a0a0a0 #fff #fff #a0a0a0;box-shadow:inset 1px 1px 0 #e3e3e3;"></div>
<div style="left:1534px;top:353px;width:16px;height:15px;background:#f0f0f0;box-sizing:border-box;border:1px solid;border-color:#e3e3e3 #a0a0a0 #a0a0a0 #e3e3e3;"></div>
<svg style="left:1539px;top:359px" width="7" height="4"><path d="M0 0h7l-3.5 3.5z" fill="#808080"/></svg>
<span class="t m" style="left:1384.0px;top:354px;transform:scaleX(0.88);color:#6d6d6d;">Июнь 2025</span>
<div style="left:1573px;top:351px;width:170px;height:19px;background:#f3f6fb;box-sizing:border-box;border:1px solid;border-color:#a0a0a0 #fff #fff #a0a0a0;box-shadow:inset 1px 1px 0 #e3e3e3;"></div>
<span class="t m" style="left:1706.0px;top:354px;transform:scaleX(0.88);color:#6d6d6d;">1,0593</span>
<span class="t m" style="left:1381.5px;top:387px;transform:scaleX(0.864);">Окончание выполнения работ:</span>
<div style="left:1381px;top:415px;width:170px;height:19px;background:#f3f6fb;box-sizing:border-box;border:1px solid;border-color:#a0a0a0 #fff #fff #a0a0a0;box-shadow:inset 1px 1px 0 #e3e3e3;"></div>
<div style="left:1534px;top:417px;width:16px;height:15px;background:#f0f0f0;box-sizing:border-box;border:1px solid;border-color:#e3e3e3 #a0a0a0 #a0a0a0 #e3e3e3;"></div>
<svg style="left:1539px;top:423px" width="7" height="4"><path d="M0 0h7l-3.5 3.5z" fill="#808080"/></svg>
<span class="t m" style="left:1384.0px;top:418px;transform:scaleX(0.88);color:#6d6d6d;">Сентябрь 2026</span>
<div style="left:1381px;top:442px;width:361px;height:1px;background:#a0a0a0;"></div>
<div style="left:1381px;top:443px;width:361px;height:1px;background:#ffffff;"></div>
<span class="t m" style="left:1381.5px;top:491px;transform:scaleX(0.8529);">Резерв, %:</span>
<span class="t m" style="left:1573.5px;top:491px;transform:scaleX(0.8364);">НДС, %:</span>
<div style="left:1381px;top:519px;width:170px;height:19px;background:#f3f6fb;box-sizing:border-box;border:1px solid;border-color:#a0a0a0 #fff #fff #a0a0a0;box-shadow:inset 1px 1px 0 #e3e3e3;"></div>
<span class="t m" style="left:1541.5px;top:522px;transform:scaleX(0.88);color:#6d6d6d;">0</span>
<div style="left:1573px;top:519px;width:170px;height:19px;background:#f3f6fb;box-sizing:border-box;border:1px solid;border-color:#a0a0a0 #fff #fff #a0a0a0;box-shadow:inset 1px 1px 0 #e3e3e3;"></div>
<span class="t m" style="left:1727.5px;top:522px;transform:scaleX(0.88);color:#6d6d6d;">20</span>
<div style="left:1556px;top:1060px;width:95px;height:25px;background:#f0f0f0;box-sizing:border-box;border:1px solid;border-color:#fff #696969 #696969 #fff;box-shadow:inset -1px -1px 0 #a0a0a0;"></div>
<span class="t m" style="left:1575.0px;top:1065px;transform:scaleX(0.88);">Применить</span>
<div style="left:1653px;top:1060px;width:95px;height:25px;background:#f0f0f0;box-sizing:border-box;border:1px solid;border-color:#fff #696969 #696969 #fff;box-shadow:inset -1px -1px 0 #a0a0a0;"></div>
<span class="t m" style="left:1681.0px;top:1065px;transform:scaleX(0.88);">Отмена</span>
<div style="left:1px;top:1091px;width:1749px;height:2px;background:#ffffff;"></div>
<div style="left:3px;top:1093px;width:85px;height:27px;background:#f0f0f0;box-sizing:border-box;border:1px solid;border-color:#a0a0a0 #fff #fff #a0a0a0;border-bottom-width:2px;"></div>
<div style="left:92px;top:1093px;width:296px;height:27px;background:#f0f0f0;box-sizing:border-box;border:1px solid;border-color:#a0a0a0 #fff #fff #a0a0a0;border-bottom-width:2px;"></div>
<div style="left:392px;top:1093px;width:1289px;height:27px;background:#f0f0f0;box-sizing:border-box;border:1px solid;border-color:#a0a0a0 #fff #fff #a0a0a0;border-bottom-width:2px;"></div>
<div style="left:1685px;top:1093px;width:30px;height:27px;background:#f0f0f0;box-sizing:border-box;border:1px solid;border-color:#a0a0a0 #fff #fff #a0a0a0;border-bottom-width:2px;"></div>
<div style="left:1719px;top:1093px;width:30px;height:27px;background:#f0f0f0;box-sizing:border-box;border:1px solid;border-color:#a0a0a0 #fff #fff #a0a0a0;border-bottom-width:2px;"></div>
<div style="left:89px;top:1093px;width:1px;height:27px;background:#a0a0a0;"></div>
<div style="left:389px;top:1093px;width:1px;height:27px;background:#a0a0a0;"></div>
<div style="left:1682px;top:1093px;width:1px;height:27px;background:#a0a0a0;"></div>
<div style="left:1716px;top:1093px;width:1px;height:27px;background:#a0a0a0;"></div>
<span class="t s" style="left:1726.5px;top:1099px;letter-spacing:-1.37px;">RU</span>
<svg style="left:1690px;top:1096px" width="20" height="20" viewBox="1690 1096 20 20"><circle cx="1700" cy="1106" r="8" fill="#999"/><rect x="1699" y="1101" width="2.1" height="3.4" fill="#fff"/><rect x="1699" y="1107.4" width="2.1" height="3.5" fill="#fff"/><path d="M1692 1098.2L1708 1113.7" stroke="#ff0000" stroke-width="1.9"/></svg>
<div style="left:0px;top:0px;width:1751px;height:1px;background:#828282;"></div>
<div style="left:0px;top:0px;width:1px;height:1122px;background:#6e6e6e;"></div>
<div style="left:1750px;top:0px;width:1px;height:1122px;background:#707070;"></div>
<div style="left:0px;top:1120px;width:1751px;height:2px;background:#6e6e6e;"></div>
</div></body></html>
